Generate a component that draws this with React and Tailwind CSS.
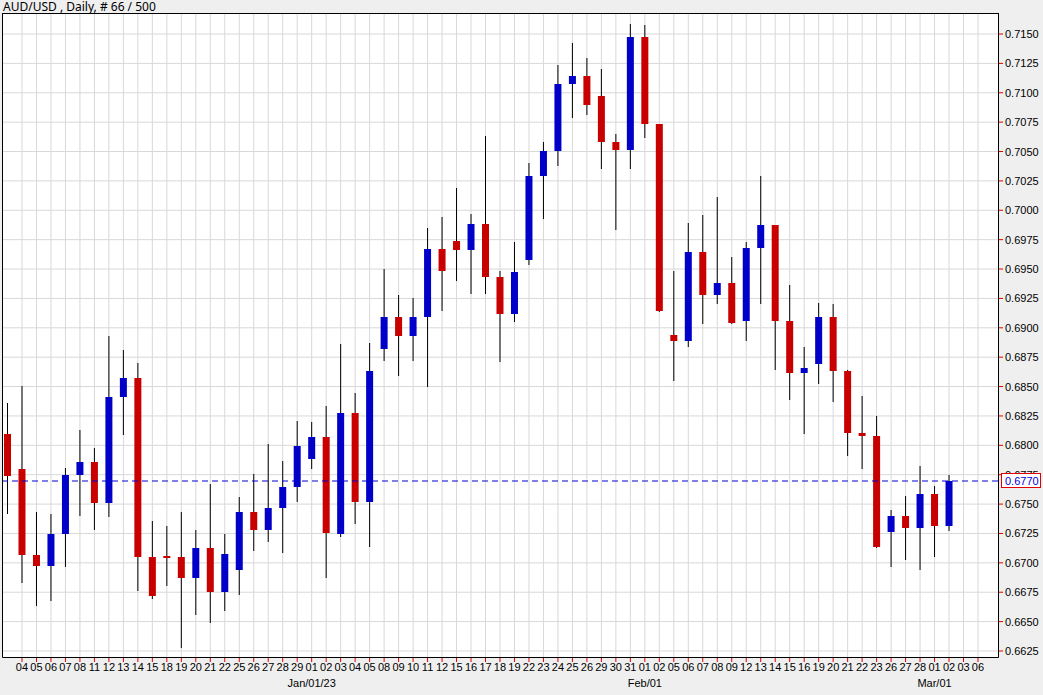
const candles = [
  // [highY, openY, closeY, lowY] in pixels
  [403, 434, 476, 514],
  [386, 469, 555, 583],
  [512, 555, 566, 606],
  [514, 566, 534, 601],
  [468, 534, 475, 567],
  [430, 475, 462, 516],
  [448, 462, 503, 530],
  [336, 503, 397, 517],
  [350, 397, 378, 435],
  [363, 378, 557, 591],
  [521, 557, 596, 599],
  [526, 556, 557, 586],
  [512, 557, 578, 648],
  [530, 578, 548, 615],
  [484, 548, 592, 623],
  [534, 592, 554, 611],
  [497, 570, 512, 595],
  [474, 512, 530, 551],
  [444, 530, 508, 542],
  [461, 508, 487, 553],
  [421, 487, 446, 502],
  [422, 459, 437, 469],
  [406, 437, 533, 578],
  [344, 534, 413, 537],
  [393, 413, 502, 524],
  [343, 502, 371, 547],
  [269, 349, 317, 361],
  [295, 317, 336, 376],
  [298, 336, 317, 361],
  [228, 317, 249, 387],
  [217, 249, 271, 311],
  [188, 241, 250, 281],
  [214, 250, 224, 294],
  [136, 224, 277, 294],
  [271, 277, 314, 362],
  [242, 314, 272, 322],
  [163, 260, 176, 265],
  [142, 176, 151, 219],
  [65, 151, 84, 166],
  [43, 84, 76, 118],
  [58, 76, 105, 115],
  [69, 96, 142, 169],
  [134, 142, 150, 230],
  [24, 150, 37, 169],
  [25, 37, 124, 138],
  [124, 124, 311, 312],
  [271, 335, 341, 381],
  [223, 341, 252, 347],
  [215, 252, 295, 324],
  [197, 295, 283, 304],
  [257, 283, 323, 324],
  [242, 321, 248, 341],
  [176, 248, 225, 304],
  [225, 225, 321, 370],
  [285, 321, 373, 400],
  [347, 373, 368, 434],
  [303, 364, 317, 384],
  [304, 317, 371, 402],
  [370, 371, 433, 456],
  [396, 433, 436, 469],
  [416, 436, 547, 548],
  [510, 532, 516, 567],
  [496, 516, 528, 560],
  [466, 528, 494, 570],
  [486, 494, 526, 557],
  [475, 526, 481, 531],
];

const labels =
  "04 05 06 07 08 11 12 13 14 15 18 19 20 21 22 25 26 27 28 29 01 02 03 04 05 08 09 10 11 12 15 16 17 18 19 22 23 24 25 26 29 30 31 01 02 05 06 07 08 09 12 13 14 15 16 19 20 21 22 23 26 27 28 01 02 03 06".split(" ");

const months = [
  ["Jan/01/23", 20],
  ["Feb/01", 43],
  ["Mar/01", 63],
];

const sx = (i) => 7.5 + i * 14.485;
const py = (k) => 34 + k * 29.38;
const font = { fontFamily: "'Liberation Sans', Arial, sans-serif", fontSize: 11 };

export default function App() {
  const prices = Array.from({ length: 22 }, (_, k) => (0.715 - k * 0.0025).toFixed(4));
  return (
    <div className="w-[1043px] h-[695px] bg-[#efefef] flex flex-col overflow-hidden">
      <div className="h-[13px] pl-[3px] text-[12px] leading-[13px] whitespace-nowrap text-black font-['Liberation_Sans',Arial,sans-serif]">
        AUD/USD , Daily, # 66 / 500
      </div>
      <svg width="1043" height="682" viewBox="0 13 1043 682" style={font}>
        <rect x="2" y="13" width="996" height="644" fill="#fff" />
        {labels.map((_, i) => (
          <line key={"v" + i} x1={sx(i + 1)} x2={sx(i + 1)} y1="14" y2="657" stroke="#d8d8d8" />
        ))}
        {prices.map((p, k) => (
          <g key={p}>
            <line x1="2" x2="998" y1={py(k)} y2={py(k)} stroke="#d8d8d8" />
            <line x1="998" x2="1003" y1={py(k)} y2={py(k)} stroke="#e00000" />
            <text x="1005" y={py(k) + 4} fill="#000">{p}</text>
          </g>
        ))}
        {candles.map(([h, o, c, l], i) => {
          const x = sx(i);
          const up = c < o;
          const top = Math.min(o, c);
          const ht = Math.max(Math.abs(o - c), 2);
          return (
            <g key={"c" + i}>
              <line x1={x} x2={x} y1={h} y2={l} stroke="#000" />
              <rect x={x - 3.5} y={top} width="7" height={ht} fill={up ? "#0000c8" : "#c80000"} />
            </g>
          );
        })}
        <line x1="2" x2="998" y1="481" y2="481" stroke="#0000d0" strokeDasharray="6 4" />
        <path d="M2.5 13 V657.5 H998.5 V13 M2 13.5 H998" fill="none" stroke="#000" />
        {labels.map((t, i) => (
          <g key={"l" + i}>
            <line x1={sx(i + 1)} x2={sx(i + 1)} y1="658" y2="662" stroke="#e00000" />
            <text x={sx(i + 1)} y="671" textAnchor="middle" fill="#000">{t}</text>
          </g>
        ))}
        {months.map(([t, i]) => (
          <text key={t} x={sx(i + 1)} y="687" textAnchor="middle" fill="#000">{t}</text>
        ))}
        <rect x="1001.5" y="473.5" width="39" height="14" fill="#fff" stroke="#e00000" />
        <text x="1005" y="485" fill="#0000e0">0.6770</text>
      </svg>
    </div>
  );
}
